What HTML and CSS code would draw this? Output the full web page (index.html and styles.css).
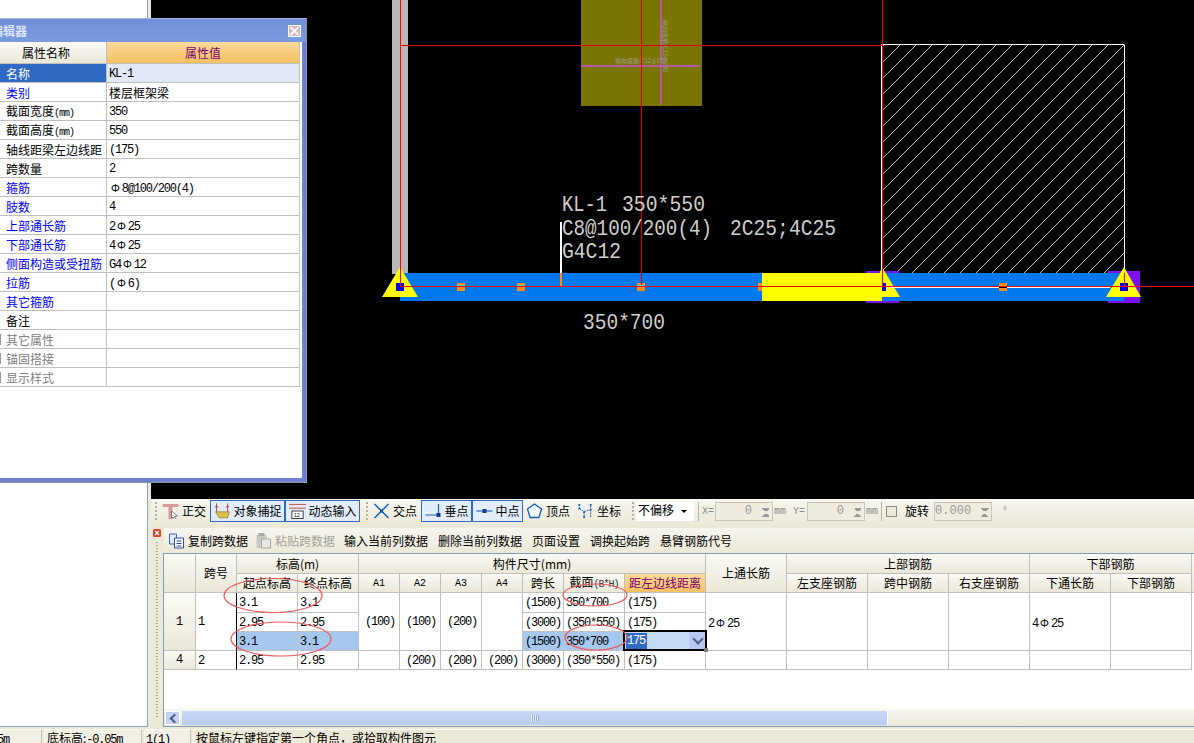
FILE: index.html
```html
<!DOCTYPE html>
<html lang="zh-CN">
<head>
<meta charset="utf-8">
<title>梁平法表格</title>
<link rel="stylesheet" href="styles.css">
</head>
<body>
<div class="app">
  <div class="workspace">
    <div class="tree-pane"></div>
    <div class="main">
      <div class="canvas">
        <svg class="cad" viewBox="151 0 1043 499" width="1043" height="499">
          <defs>
            <pattern id="hatch" patternUnits="userSpaceOnUse" width="16" height="16" patternTransform="translate(884 45)">
              <path d="M-2 18 18 -2 M-2 2 2 -2 M14 18 18 14" stroke="#b4b4b4" stroke-width="1" fill="none"/>
            </pattern>
          </defs>
          <rect x="392" y="0" width="16" height="274" fill="#b8b8b8"/>
          <rect x="581" y="0" width="121" height="106" fill="#7a7500"/>
          <rect x="660" y="0" width="2" height="105" fill="#b45aa0"/>
          <rect x="581" y="65" width="119" height="2" fill="#b45aa0"/>
          <text class="tiny" x="615" y="63">横向底筋:C12@250</text>
          <text class="tiny" transform="translate(663 20) rotate(90)">纵向底筋:C12@250</text>
          <rect x="882" y="45" width="242" height="228" fill="url(#hatch)"/>
          <path d="M881.5 273V44.5H1124M1124.5 44.5V273" stroke="#fff" fill="none"/>

          <rect x="866" y="271" width="33" height="32" fill="#7d10ee"/>
          <rect x="1108" y="271" width="32" height="32" fill="#7d10ee"/>
          <rect x="400" y="273" width="724" height="28" fill="#0078ee"/>
          <rect x="762" y="273" width="120" height="28" fill="#ffff00"/>

          <path d="M400 267 418 297H382Z M882 267 900 297H870Z M1124 267 1141 297H1106Z" fill="#ffff00"/>
          <g fill="#ff8c10">
            <rect x="457" y="283" width="8" height="8"/><rect x="517" y="283" width="8" height="8"/>
            <rect x="637" y="283" width="8" height="8"/><rect x="758" y="283" width="4" height="8"/>
            <rect x="999" y="283" width="8" height="8"/><rect x="560" y="273" width="2" height="13"/>
          </g>
          <g fill="#40e0d0">
            <rect x="457" y="285" width="8" height="1"/><rect x="517" y="285" width="8" height="1"/>
            <rect x="637" y="285" width="8" height="1"/>
          </g>
          <g fill="#0000ee">
            <rect x="396" y="283" width="8" height="8"/><rect x="882" y="283" width="4" height="8"/>
            <rect x="1120" y="283" width="8" height="8"/>
          </g>
          <rect x="560" y="222" width="2" height="51" fill="#fff"/>
          <rect x="400" y="0" width="1" height="287" fill="#ff0000"/>
          <rect x="641" y="0" width="1" height="285" fill="#e00000"/>
          <rect x="882" y="0" width="1" height="287" fill="#ff0000"/>
          <rect x="1124" y="273" width="1" height="14" fill="#ff0000"/>
          <rect x="400" y="45" width="482" height="1" fill="#e00000"/>
          <rect x="890" y="287" width="220" height="1" fill="#fff"/>
          <rect x="999" y="287" width="8" height="1" fill="#000"/>
          <rect x="400" y="286" width="794" height="1" fill="#ff0000"/>
          <g class="cad-text">
            <text x="562" y="211" textLength="45" lengthAdjust="spacingAndGlyphs">KL-1</text>
            <text x="622" y="211" textLength="83" lengthAdjust="spacingAndGlyphs">350*550</text>
            <text x="562" y="235" textLength="150" lengthAdjust="spacingAndGlyphs">C8@100/200(4)</text>
            <text x="730" y="235" textLength="106" lengthAdjust="spacingAndGlyphs">2C25;4C25</text>
            <text x="562" y="258" textLength="59" lengthAdjust="spacingAndGlyphs">G4C12</text>
            <text x="583" y="329" textLength="82" lengthAdjust="spacingAndGlyphs">350*700</text>
          </g>
        </svg>
      </div>
      <div class="panel">
        <div class="snapbar">
          <span class="grip"></span>
          <div class="tool">
            <svg class="ico" viewBox="0 0 16 16"><path d="M0 1h16v3h-6v12H6V4H0z" fill="#d89a98"/><path d="M9 8l6 5-3 .5 1.500 2.500-1.500.6-1.500-2.600L9 15z" fill="#fff" stroke="#556" stroke-width=".7"/></svg>
            <span>正交</span>
          </div>
          <div class="snap-group">
            <div class="tool tool-on wide">
              <svg class="ico" viewBox="0 0 20 18"><path d="M3 0v10M16 0v10M1 4h4M14 4h4" stroke="#a33" fill="none"/><path d="M2 10h16l-2 7H6z" fill="#e0c050" stroke="#8a7020" stroke-width=".8"/></svg>
              <span>对象捕捉</span>
            </div>
            <div class="tool tool-on wide">
              <svg class="ico" viewBox="0 0 18 17"><path d="M0 1.500h18M0 5.500h18" stroke="#b44" fill="none"/><rect x="3" y="8.500" width="12" height="8" fill="#fff" stroke="#333"/><text class="ico-text" x="5" y="15">12</text></svg>
              <span>动态输入</span>
            </div>
          </div>
          <span class="grip grip-mid"></span>
          <div class="tool">
            <svg class="ico" viewBox="0 0 16 16"><path d="M1 1l14 14M15 1L1 15" stroke="#1060c0" stroke-width="1.500"/><rect x="6.500" y="6.500" width="3" height="3" fill="#15a"/></svg>
            <span>交点</span>
          </div>
          <div class="snap-group snap-gap">
            <div class="tool tool-on narrow">
              <svg class="ico" viewBox="0 0 16 16"><path d="M0 12h14M13 12V1" stroke="#2060b8" stroke-width="1.200" fill="none"/><rect x="11" y="10" width="4" height="4" fill="#123e90"/></svg>
              <span>垂点</span>
            </div>
            <div class="tool tool-on narrow">
              <svg class="ico" viewBox="0 0 16 16"><path d="M0 8h16" stroke="#4c84d8" stroke-width="1.500"/><rect x="6" y="6" width="4" height="4" fill="#123e90"/></svg>
              <span>中点</span>
            </div>
          </div>
          <div class="tool snap-tight">
            <svg class="ico" viewBox="0 0 16 16"><path d="M8 1l7 5-2.600 8.500H3.600L1 6z" fill="#f4f8ff" stroke="#1060c0" stroke-width="1.300"/></svg>
            <span>顶点</span>
          </div>
          <div class="tool snap-tight2">
            <svg class="ico" viewBox="0 0 17 17"><path d="M2 6l5 3v7M7 9l7-2V1M2 6V1M14 7v8" stroke="#1060c0" stroke-dasharray="2 1" fill="none"/><path d="M1 1h2v2H1zM1 5h2v2H1zM6 9h2v2H6zM13 1h2v2h-2zM13 6h2v2h-2zM6 14h2v2H6z" fill="#1060c0"/></svg>
            <span>坐标</span>
          </div>
          <span class="grip grip-end"></span>
          <div class="select"><span>不偏移</span><i class="caret"></i></div>
          <span class="vsep"></span>
          <span class="axis">X=</span>
          <div class="spin"><span>0</span><i class="spin-btns"></i></div>
          <span class="axis">mm</span>
          <span class="axis axis-y">Y=</span>
          <div class="spin"><span>0</span><i class="spin-btns"></i></div>
          <span class="axis">mm</span>
          <span class="vsep vsep-b"></span>
          <i class="check"></i>
          <span class="rotate-label">旋转</span>
          <div class="spin spin-angle"><span>0.000</span><i class="spin-btns"></i></div>
          <span class="axis">°</span>
        </div>
        <div class="dock">
          <div class="dock-edge">
            <svg class="dock-close" viewBox="0 0 8 8" width="8" height="8"><rect width="8" height="8" rx="1.500" fill="#d8402a"/><path d="M2 2l4 4M6 2L2 6" stroke="#fff" stroke-width="1.200"/></svg>
            <i class="dots"></i>
          </div>
          <div class="dock-body">
            <div class="cmdbar">
              <span class="cmd">
                <svg class="ico" viewBox="0 0 16 16"><path d="M1 1h7v10H1z" fill="#dfe9f8" stroke="#3a62b0"/><path d="M6 5h9v10H6z" fill="#fff" stroke="#2850a0"/><path d="M8 8h5M8 10.500h5M8 13h5" stroke="#2850a0"/></svg>
                复制跨数据
              </span>
              <span class="cmd cmd-off">
                <svg class="ico" viewBox="0 0 16 16"><rect x="1" y="2" width="10" height="13" fill="#c8c8c4"/><rect x="3" y="0" width="6" height="3" fill="#a8a8a4"/><rect x="6" y="6" width="9" height="9" fill="#e8e8e4" stroke="#a8a8a4"/></svg>
                粘贴跨数据
              </span>
              <span class="cmd">输入当前列数据</span>
              <span class="cmd">删除当前列数据</span>
              <span class="cmd">页面设置</span>
              <span class="cmd">调换起始跨</span>
              <span class="cmd">悬臂钢筋代号</span>
            </div>
            <div class="grid-frame">
              <table class="grid">
                <colgroup>
                  <col class="c32"><col class="c41"><col class="c61"><col class="c61">
                  <col class="c41"><col class="c41"><col class="c41"><col class="c41">
                  <col class="c41"><col class="c61"><col class="c81"><col class="c81">
                  <col class="c81"><col class="c81"><col class="c81"><col class="c81"><col class="c81">
                  <col class="c3">
                </colgroup>
                <thead>
                  <tr class="tall">
                    <th rowspan="2"></th>
                    <th rowspan="2">跨号</th>
                    <th colspan="2">标高(m)</th>
                    <th colspan="7">构件尺寸(mm)</th>
                    <th rowspan="2">上通长筋</th>
                    <th colspan="3">上部钢筋</th>
                    <th colspan="2">下部钢筋</th>
                    <th rowspan="2" class="filler"></th>
                  </tr>
                  <tr>
                    <th>起点标高</th><th>终点标高</th>
                    <th class="mono-h">A1</th><th class="mono-h">A2</th><th class="mono-h">A3</th><th class="mono-h">A4</th>
                    <th>跨长</th><th>截面<span class="bh">(B*H)</span></th><th class="active-col">距左边线距离</th>
                    <th>左支座钢筋</th><th>跨中钢筋</th><th>右支座钢筋</th><th>下通长筋</th><th>下部钢筋</th>
                  </tr>
                </thead>
                <tbody>
                  <tr class="tall">
                    <th rowspan="3" class="rowhead">1</th>
                    <td rowspan="3" class="num frozen">1</td>
                    <td class="num">3.1</td><td class="num">3.1</td>
                    <td rowspan="3" class="num mid">(100)</td><td rowspan="3" class="num mid">(100)</td><td rowspan="3" class="num mid">(200)</td><td rowspan="3"></td>
                    <td class="num">(1500)</td><td class="num">350*700</td><td class="num">(175)</td>
                    <td rowspan="3" class="num">2<span class="bar">Φ</span>25</td>
                    <td rowspan="3"></td><td rowspan="3"></td><td rowspan="3"></td>
                    <td rowspan="3" class="num">4<span class="bar">Φ</span>25</td>
                    <td rowspan="3"></td>
                  </tr>
                  <tr>
                    <td class="num">2.95</td><td class="num">2.95</td>
                    <td class="num">(3000)</td><td class="num">(350*550)</td><td class="num">(175)</td>
                  </tr>
                  <tr>
                    <td class="num sel">3.1</td><td class="num sel">3.1</td>
                    <td class="num sel">(1500)</td><td class="num sel">350*700</td>
                    <td class="editor"><div class="edit-box"><span class="edit-text">175</span><i class="edit-drop"></i></div><i class="edit-handle"></i></td>
                  </tr>
                  <tr>
                    <th class="rowhead">4</th>
                    <td class="num frozen">2</td>
                    <td class="num">2.95</td><td class="num">2.95</td>
                    <td></td><td class="num mid">(200)</td><td class="num mid">(200)</td><td class="num mid">(200)</td>
                    <td class="num">(3000)</td><td class="num">(350*550)</td><td class="num">(175)</td>
                    <td></td><td></td><td></td><td></td><td></td><td></td>
                  </tr>
                </tbody>
              </table>
              <div class="hscroll">
                <i class="sb-btn"></i>
                <i class="sb-thumb"></i>
              </div>
            </div>
          </div>
        </div>
      </div>
    </div>
  </div>
  <div class="status">
    <span class="cell s1"><b class="num-t">5m</b></span>
    <span class="cell s2">底标高:<b class="num-t">-0.05m</b></span>
    <span class="cell s3"><b class="num-t">1(1)</b></span>
    <span class="cell s4">按鼠标左键指定第一个角点，或拾取构件图元</span>
  </div>

  <section class="dialog">
    <header class="dialog-title">
      <span>属性编辑器</span>
      <i class="dialog-x"></i>
    </header>
    <div class="dialog-body">
      <table class="props">
        <colgroup><col class="p1"><col class="p2"></colgroup>
        <thead><tr><th>属性名称</th><th class="pv">属性值</th></tr></thead>
        <tbody>
          <tr class="cur"><td>名称</td><td class="v">KL-1</td></tr>
          <tr><td class="link">类别</td><td class="cn">楼层框架梁</td></tr>
          <tr><td>截面宽度<span class="unit">(mm)</span></td><td class="v">350</td></tr>
          <tr><td>截面高度<span class="unit">(mm)</span></td><td class="v">550</td></tr>
          <tr><td>轴线距梁左边线距</td><td class="v">(175)</td></tr>
          <tr><td>跨数量</td><td class="v">2</td></tr>
          <tr><td class="link">箍筋</td><td class="v"><span class="bar">Φ</span>8@100/200(4)</td></tr>
          <tr><td class="link">肢数</td><td class="v">4</td></tr>
          <tr><td class="link">上部通长筋</td><td class="v">2<span class="bar">Φ</span>25</td></tr>
          <tr><td class="link">下部通长筋</td><td class="v">4<span class="bar">Φ</span>25</td></tr>
          <tr><td class="link">侧面构造或受扭筋</td><td class="v">G4<span class="bar">Φ</span>12</td></tr>
          <tr><td class="link">拉筋</td><td class="v">(<span class="bar">Φ</span>6)</td></tr>
          <tr><td class="link">其它箍筋</td><td></td></tr>
          <tr><td>备注</td><td></td></tr>
          <tr><td class="group">其它属性</td><td></td></tr>
          <tr><td class="group">锚固搭接</td><td></td></tr>
          <tr><td class="group">显示样式</td><td></td></tr>
        </tbody>
      </table>
    </div>
  </section>

  <svg class="marks" viewBox="0 0 1194 743" width="1194" height="743">
    <ellipse cx="273" cy="595.500" rx="49" ry="17"/>
    <ellipse cx="281" cy="639" rx="50" ry="17"/>
    <ellipse cx="595" cy="595" rx="32" ry="11"/>
    <ellipse cx="596" cy="637.500" rx="31" ry="12.500"/>
  </svg>
</div>
</body>
</html>
```

FILE: styles.css
```css
* { box-sizing: border-box; }
html, body { margin: 0; height: 100%; overflow: hidden; background: #ece9d8; }
body { font: 12px/1 "Noto Sans CJK SC", "Liberation Sans", sans-serif; color: #000; }
i { display: block; font-style: normal; }
b { font-weight: 400; }

.app { position: relative; width: 1194px; height: 743px; overflow: hidden; display: flex; flex-direction: column; }
.workspace { display: flex; height: 727px; flex: none; }
.tree-pane { width: 148px; flex: none; background: #fff; border-right: 1px solid #8ba6c4; border-bottom: 1px solid #8ba6c4; }
.main { flex: 1; min-width: 0; display: flex; flex-direction: column; }

/* CAD canvas */
.canvas { margin-left: 3px; height: 499px; flex: none; background: #000; }
.cad { display: block; }
.cad-text text { font: 22px "Liberation Mono", monospace; fill: #cfcfcf; }
.tiny { font: 6px "Noto Sans CJK SC", sans-serif; fill: #9a9a9a; }

/* Panel */
.panel { flex: 1; min-height: 0; display: flex; flex-direction: column; background: #ece9d8; }
.snapbar { height: 27px; flex: none; margin-left: 3px; padding: 0 0 3px 4px; display: flex; align-items: center; background: linear-gradient(#f7f6ef, #ece9d8); white-space: nowrap; overflow: hidden; }
.grip { width: 2px; height: 18px; margin-right: 5px; flex: none; background: repeating-linear-gradient(#b5b2a2 0 2px, transparent 2px 4px); }
.grip-mid { margin: 0 5px 0 6px; }
.grip-end { margin: 0 2px 0 11px; }
.tool { display: flex; align-items: center; gap: 3px; height: 22px; }
.ico { display: block; width: 17px; height: 16px; flex: none; }
.ico-text { font: 6px "Liberation Sans", sans-serif; fill: #111; }
.snap-group { display: flex; margin-left: 4px; }
.snap-gap { margin-left: 4px; }
.snap-tight { margin-left: 3px; }
.snap-tight2 { margin-left: 7px; }
.tool-on { background: #e3edf9; border: 1px solid #316ac5; justify-content: center; }
.wide { width: 75px; }
.narrow { width: 51px; }

.select { width: 58px; height: 19px; margin-right: 4px; padding: 2px 0 0 2px; background: #fff; display: flex; justify-content: space-between; }
.caret { width: 0; height: 0; margin: 6px 7px 0 0; border: 3px solid transparent; border-top-color: #000; }
.vsep { width: 1px; height: 19px; flex: none; margin-right: 3px; background: #b8b5a6; }
.vsep-b { margin: 0 4px 0 2px; }
.axis { font: 10px "Liberation Mono", monospace; color: #8a8a8a; width: 12px; margin-right: 1px; flex: none; }
.axis-y { margin-left: 6px; margin-right: 2px; }
.spin { width: 58px; height: 19px; margin: 0 1px 0 0; display: flex; align-items: center; justify-content: flex-end; gap: 9px; border: 1px solid #c9c6b6; background: #efecdf; font: 12px "Liberation Mono", monospace; color: #9a9a9a; flex: none; }
.spin-btns { width: 10px; height: 13px; margin-right: 1px; background:
  linear-gradient(45deg, transparent 50%, #999 50%) no-repeat 0 3px / 5px 3px,
  linear-gradient(-45deg, transparent 50%, #999 50%) no-repeat 5px 3px / 5px 3px,
  linear-gradient(135deg, transparent 50%, #999 50%) no-repeat 0 9px / 5px 3px,
  linear-gradient(-135deg, transparent 50%, #999 50%) no-repeat 5px 9px / 5px 3px; }
.check { width: 11px; height: 11px; border: 1px solid #8a8a80; background: #ece9d8; flex: none; }
.rotate-label { margin: 0 5px 0 8px; }
.spin-angle { margin-right: 10px; }

/* Dock */
.dock { flex: 1; min-height: 0; display: flex; }
.dock-edge { width: 15px; flex: none; padding: 3px 0 0 5px; }
.dock-close { display: block; }
.dots { width: 2px; height: 176px; margin: 5px 0 0 3px; background: repeating-linear-gradient(#a8a594 0 1px, transparent 1px 3px); }
.dock-body { flex: 1; min-width: 0; display: flex; flex-direction: column; padding-top: 2px; }
.cmdbar { height: 25px; flex: none; margin-left: 1px; padding-left: 4px; display: flex; align-items: center; gap: 10px; background: linear-gradient(#f7f6ef, #ece9d8); white-space: nowrap; }
.cmd { display: flex; align-items: center; gap: 3px; }
.cmd-off { color: #a5a298; margin: 0 -1px 0 -3px; }
.grid-frame { flex: 1; min-height: 0; display: flex; flex-direction: column; justify-content: space-between; background: #fff; border-top: 1px solid #7f9db9; border-left: 1px solid #7f9db9; border-bottom: 1px solid #7f9db9; }

/* Grid */
.grid { table-layout: fixed; border-collapse: separate; border-spacing: 0; width: 1030px; }
.c32 { width: 32px; } .c41 { width: 41px; } .c61 { width: 61px; } .c81 { width: 81px; } .c3 { width: 3px; }
.grid th, .grid td { height: 19px; padding: 0; border-right: 1px solid #c0c0c0; border-bottom: 1px solid #c0c0c0; overflow: hidden; white-space: nowrap; }
.grid .tall > th:not([rowspan="3"]), .grid .tall > td:not([rowspan="3"]) { height: 20px; }
.grid th { font-weight: 400; text-align: center; background: linear-gradient(#fbfaf5, #ebe8d9); }
.grid .filler { border-right: 0; }
.mono-h { font: 10px "Liberation Mono", monospace; }
.bh { font: 10px "Liberation Mono", monospace; letter-spacing: -1px; color: #333; }
.grid .active-col { color: #7b0070; background: linear-gradient(#fbd99a, #f5c163); }
.grid .rowhead { font: 12px "Liberation Mono", monospace; background: linear-gradient(#fbfaf5, #ebe8d9); }
.grid .num { font: 12px "Liberation Mono", monospace; letter-spacing: -1.2px; padding: 1px 0 0 2px; text-align: left; }
.grid .frozen { border-right-color: #000; }
.grid .mid { text-align: center; }
.sel { background: #a6c8ee; }
.bar { font: 11px "Noto Sans CJK SC", sans-serif; letter-spacing: 0; padding: 0 2px; }

.grid .editor { position: relative; overflow: visible; }
.edit-box { position: absolute; left: -2px; top: -2px; right: -2px; bottom: -1px; border: 2px solid #000; background: #c6dcf5; display: flex; align-items: center; justify-content: space-between; }
.edit-text { font: 12px "Liberation Mono", monospace; letter-spacing: -1.2px; color: #fff; background: #316ac5; padding: 1px 2px 1px 1px; margin-left: 1px; }
.edit-drop { width: 16px; height: 17px; background: #b7c9f0; position: relative; }
.edit-drop::after { content: ""; position: absolute; left: 5px; top: 3px; width: 6px; height: 6px; border-right: 2px solid #4d6185; border-bottom: 2px solid #4d6185; transform: rotate(45deg); }
.edit-handle { position: absolute; right: -3px; bottom: -2px; width: 4px; height: 4px; background: #808080; }

.hscroll { height: 17px; flex: none; padding: 2px 0 1px 1px; display: flex; gap: 2px; background: linear-gradient(#f7f6ef, #ece9d8); }
.sb-btn { width: 15px; height: 14px; background: #c4d3f7; border: 1px solid #fff; position: relative; }
.sb-btn::after { content: ""; position: absolute; left: 5px; top: 3px; width: 5px; height: 5px; border-left: 2px solid #4d6185; border-bottom: 2px solid #4d6185; transform: rotate(45deg); }
.sb-thumb { width: 706px; height: 14px; border-right: 1px solid #fff; background:
  repeating-linear-gradient(90deg, #eef3ff 0 1px, #8fa8e0 1px 2px) no-repeat center / 8px 6px,
  linear-gradient(#c9d8fa, #b9cdf5); }

/* Status bar */
.status { height: 16px; flex: none; padding-top: 2px; display: flex; gap: 2px; overflow: hidden; background: #ece9d8; }
.cell { height: 17px; padding: 2px 0 0 2px; white-space: nowrap; background: #f2f0e4; border: 1px solid #fbfaf4; border-right-color: #c9c6b6; }
.num-t { font: 12px "Liberation Mono", monospace; letter-spacing: -1.2px; }
.s1 { width: 42px; text-indent: -6px; }
.s2 { width: 98px; }
.s3 { width: 47px; padding-left: 1px; }
.s4 { flex: 1; border-right: 0; background: #ece9d8; }

/* Floating dialog */
.dialog { position: absolute; left: -40px; top: 18px; width: 347px; height: 465px; display: flex; flex-direction: column; background: #6d82d0; border: 1px solid #a9b8d8; border-right-color: #8893a8; border-bottom-color: #8893a8; padding: 0 4px 4px 8px; }
.dialog-title { height: 23px; flex: none; margin: 0 -4px 0 -8px; padding: 0 5px 0 6px; display: flex; align-items: center; justify-content: space-between; background: linear-gradient(#6f8fd6, #7b9be0); color: #dbe4fa; font-weight: 700; }
.dialog-x { width: 13px; height: 12px; background: #d8b4c8; border: 1px solid #fff; position: relative; }
.dialog-x::before, .dialog-x::after { content: ""; position: absolute; left: 0; top: 4px; width: 11px; height: 2px; background: #fff; transform: rotate(45deg); }
.dialog-x::after { transform: rotate(-45deg); }
.dialog-body { flex: 1; background: #fff; min-height: 0; }

.props { table-layout: fixed; border-collapse: separate; border-spacing: 0; width: 331px; }
.p1 { width: 138px; } .p2 { width: 193px; }
.props th, .props td { height: 19px; padding: 1px 0 0; border-right: 1px solid #c0c0c0; border-bottom: 1px solid #c0c0c0; white-space: nowrap; overflow: hidden; }
.props th { height: 22px; font-weight: 400; background: linear-gradient(#fbfaf5, #ebe8d9); padding-left: 17px; }
.props .pv { color: #7b0070; background: linear-gradient(#fbd99a, #f5c163); padding-left: 0; }
.props td:first-child { padding-left: 37px; }
.props .v { padding-left: 2px; font: 12px "Liberation Mono", monospace; letter-spacing: -1.2px; }
.props .cn { padding-left: 2px; }
.props .cur td:first-child { background: #316ac5; color: #fff; }
.props .cur td { background: #e0e9f5; }
.props .link { color: #0000ff; }
.props .group { color: #808080; background: linear-gradient(#999, #999) no-repeat 31px center / 1px 11px; }
.unit { font: 10px "Liberation Mono", monospace; letter-spacing: -1px; }

/* Hand-drawn annotations over the grid */
.marks { position: absolute; left: 0; top: 0; pointer-events: none; }
.marks ellipse { fill: none; stroke: #ee5a5a; stroke-width: 1.200; }
```
